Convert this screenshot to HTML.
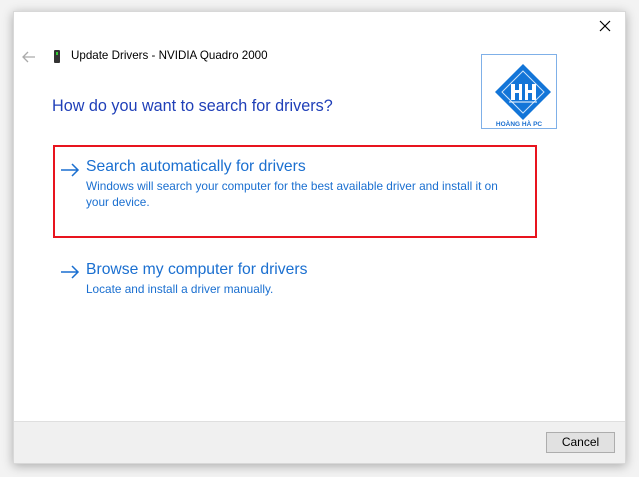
<!DOCTYPE html>
<html><head><meta charset="utf-8"><style>
body{margin:0;width:639px;height:477px;background:#f3f3f3;position:relative;overflow:hidden;font-family:"Segoe UI","Liberation Sans",sans-serif}
.win{position:absolute;left:13px;top:11px;width:613px;height:453px;background:#fff;box-shadow:0 2px 10px rgba(0,0,0,.3);border:1px solid #d8d8d8;box-sizing:border-box}
.t{position:absolute;white-space:nowrap}
.foot{position:absolute;left:0;right:0;bottom:0;height:41px;background:#f0f0f0;border-top:1px solid #dfdfdf}
.btn{position:absolute;left:532px;top:10px;width:67px;height:19px;border:1px solid #adadad;background:#e1e1e1;font-size:12px;text-align:center;line-height:19px;color:#000}
</style></head><body>
<div class="win">
<svg style="position:absolute;left:585px;top:8px" width="12" height="12"><path d="M1 1L11 11M11 1L1 11" stroke="#000" stroke-width="1.2"/></svg>
<svg style="position:absolute;left:8px;top:39px" width="14" height="12"><path d="M1 6H13M6 1L1 6L6 11" stroke="#aaa" stroke-width="1.3" fill="none"/></svg>
<div style="position:absolute;left:40px;top:38px;width:6px;height:13px;background:#333;border-radius:1px"></div>
<div style="position:absolute;left:42px;top:40px;width:2px;height:3px;background:#3c3"></div>
<div class="t" style="left:57px;top:37px;font-size:11.6px;color:#000">Update Drivers - NVIDIA Quadro 2000</div>
<div class="t" style="left:38px;top:85px;font-size:16.2px;color:#1f3fb8">How do you want to search for drivers?</div>
<div style="position:absolute;left:467px;top:42px;width:76px;height:75px;border:1px solid #7fb0e8;box-sizing:border-box"></div>
<svg style="position:absolute;left:467px;top:42px" width="76" height="75">
<polygon points="42,10 70,38 42,66 14,38" fill="#1275d8"/>
<polygon points="42,17 63,38 42,59 21,38" fill="none" stroke="#cfe4fa" stroke-width="1"/>
<path d="M30 30h4v6h4v-6h3v16h-3v-7h-4v7h-4zM44 30h3v6h4v-6h4v16h-4v-7h-4v7h-3z" fill="#fff"/>
<path d="M28 48h28" stroke="#fff" stroke-width="1"/>
<text x="38" y="72" font-size="6.5" font-weight="bold" fill="#1a6fd0" text-anchor="middle" font-family="Liberation Sans">HOÀNG HÀ PC</text>
</svg>
<div style="position:absolute;left:39px;top:133px;width:484px;height:93px;border:2px solid #e8141e;box-sizing:border-box"></div>
<svg style="position:absolute;left:46px;top:151px" width="20" height="14"><path d="M1 7H18M12 1L18 7L12 13" stroke="#1a6fd0" stroke-width="1.5" fill="none"/></svg>
<div class="t" style="left:72px;top:146px;font-size:15.7px;color:#1a6fd0">Search automatically for drivers</div>
<div class="t" style="left:72px;top:166px;font-size:11.8px;color:#1a6fd0;line-height:16px">Windows will search your computer for the best available driver and install it on<br>your device.</div>
<svg style="position:absolute;left:46px;top:253px" width="20" height="14"><path d="M1 7H18M12 1L18 7L12 13" stroke="#1a6fd0" stroke-width="1.5" fill="none"/></svg>
<div class="t" style="left:72px;top:249px;font-size:15.7px;color:#1a6fd0">Browse my computer for drivers</div>
<div class="t" style="left:72px;top:270px;font-size:11.8px;color:#1a6fd0">Locate and install a driver manually.</div>
<div class="foot"><div class="btn">Cancel</div></div>
</div>
</body></html>
